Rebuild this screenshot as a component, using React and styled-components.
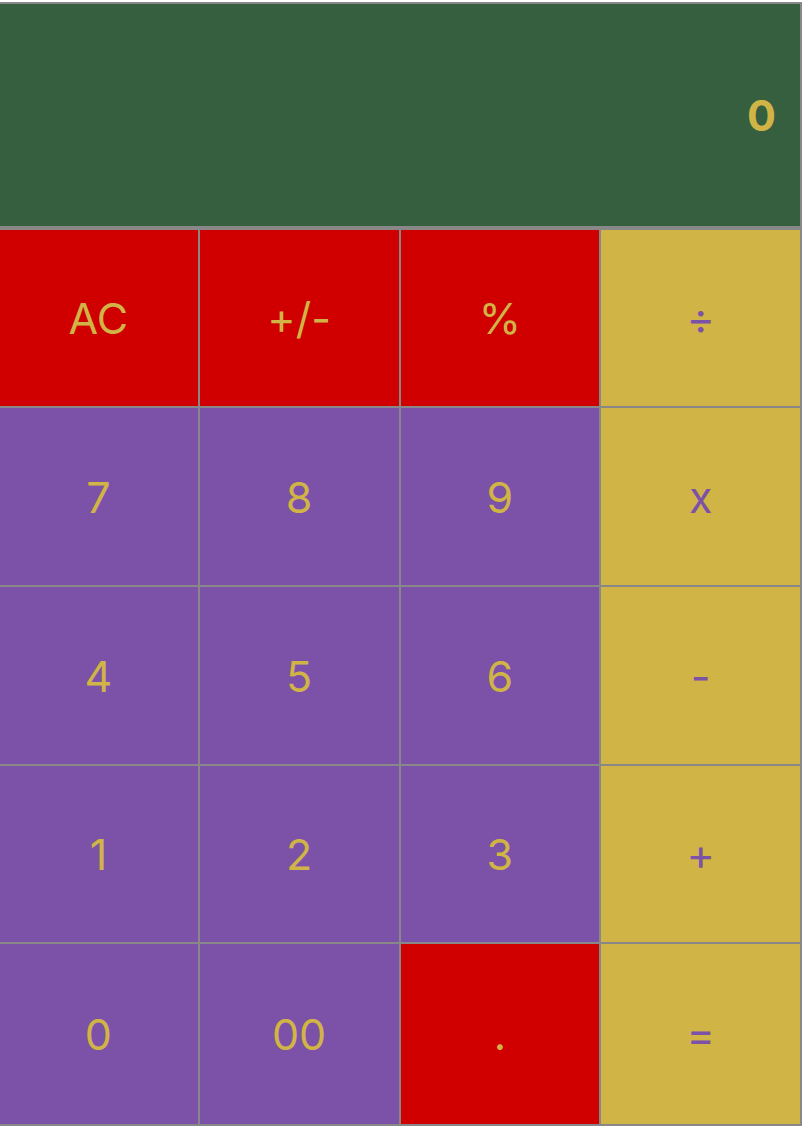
import React, { useState } from 'react';
import styled, { createGlobalStyle } from 'styled-components';

const GlobalStyle = createGlobalStyle`
    body {
        margin: 0;
        background: #ffffff;
        font-family: Inter, "Liberation Sans", sans-serif;
        overflow: hidden;
    }
`;

const keys = [
    { label: 'AC', kind: 'func' },
    { label: '+/-', kind: 'func' },
    { label: '%', kind: 'func' },
    { label: '÷', kind: 'op' },
    { label: '7', kind: 'num' },
    { label: '8', kind: 'num' },
    { label: '9', kind: 'num' },
    { label: 'x', kind: 'op' },
    { label: '4', kind: 'num' },
    { label: '5', kind: 'num' },
    { label: '6', kind: 'num' },
    { label: '-', kind: 'op' },
    { label: '1', kind: 'num' },
    { label: '2', kind: 'num' },
    { label: '3', kind: 'num' },
    { label: '+', kind: 'op' },
    { label: '0', kind: 'num' },
    { label: '00', kind: 'num' },
    { label: '.', kind: 'func' },
    { label: '=', kind: 'op' },
];

export default function App() {
    const [value] = useState('0');

    return (
        <>
            <GlobalStyle />
            <Calculator>
                <Display>
                    <Result>{value}</Result>
                </Display>
                <Keypad>
                    {keys.map((key) => (
                        <Key key={key.label} $kind={key.kind}>{key.label}</Key>
                    ))}
                </Keypad>
            </Calculator>
        </>
    );
}

const Calculator = styled.div`
    width: 805px;
    margin-top: 2px;
    margin-left: -3px;
    display: flex;
    flex-direction: column;
`;

const Display = styled.div`
    height: 222px;
    border: 2px solid #888888;
    background: #365f40;
    display: flex;
    align-items: center;
    justify-content: flex-end;
    padding-right: 24px;
`;

const Result = styled.div`
    color: #d1b446;
    font-size: 43px;
    font-weight: 700;
`;

const Keypad = styled.div`
    border: 1px solid #888888;
    display: grid;
    grid-template-columns: repeat(4, 1fr);
    grid-template-rows: 178px 179px 179px 178px 182px;
`;

const colours = {
    func: { bg: '#d00000', fg: '#d1b446' },
    num: { bg: '#7b52a8', fg: '#d1b446' },
    op: { bg: '#d1b446', fg: '#7b52a8' },
};

const Key = styled.button`
    border: 1px solid #888888;
    border-radius: 0;
    margin: 0;
    padding: 0;
    background: ${(p) => colours[p.$kind].bg};
    color: ${(p) => colours[p.$kind].fg};
    font-family: Inter, "Liberation Sans", sans-serif;
    font-size: 43px;
    font-weight: 400;
    display: flex;
    align-items: center;
    justify-content: center;
    cursor: pointer;
`;
